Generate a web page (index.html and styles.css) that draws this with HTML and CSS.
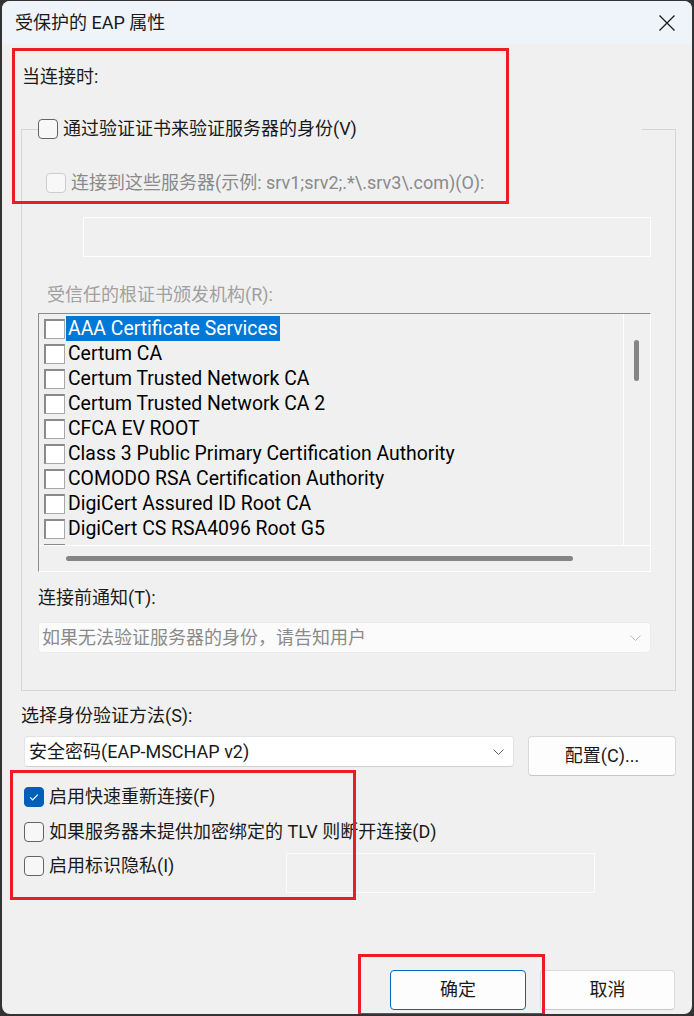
FILE: index.html
```html
<!DOCTYPE html>
<html lang="zh-CN">
<head>
<meta charset="utf-8">
<title>受保护的 EAP 属性</title>
<link rel="stylesheet" href="styles.css">
</head>
<body>
<div class="window">
  <div class="titlebar">
    <span class="title">受保护的 EAP 属性</span>
    <span class="close" aria-label="关闭">
      <svg width="16" height="16" viewBox="0 0 16 16"><path d="M0.5 0.5L15.5 15.5M15.5 0.5L0.5 15.5" stroke="#1b1b1b" stroke-width="1.3" fill="none"/></svg>
    </span>
  </div>
  <div class="content">
    <div class="label when">当连接时:</div>
    <div class="group">
      <div class="legend">
        <span class="cb"></span><span>通过验证证书来验证服务器的身份(V)</span>
      </div>
      <div class="row servers"><span class="cb cb-disabled"></span><span class="dis">连接到这些服务器(示例: srv1;srv2;.*\.srv3\.com)(O):</span></div>
      <div class="servers-input"></div>
      <div class="label trusted">受信任的根证书颁发机构(R):</div>
      <div class="list">
        <div class="list-items">
          <div class="item"><span class="lcb"></span><span class="itext selected">AAA Certificate Services</span></div>
          <div class="item"><span class="lcb"></span><span class="itext">Certum CA</span></div>
          <div class="item"><span class="lcb"></span><span class="itext">Certum Trusted Network CA</span></div>
          <div class="item"><span class="lcb"></span><span class="itext">Certum Trusted Network CA 2</span></div>
          <div class="item"><span class="lcb"></span><span class="itext">CFCA EV ROOT</span></div>
          <div class="item"><span class="lcb"></span><span class="itext">Class 3 Public Primary Certification Authority</span></div>
          <div class="item"><span class="lcb"></span><span class="itext">COMODO RSA Certification Authority</span></div>
          <div class="item"><span class="lcb"></span><span class="itext">DigiCert Assured ID Root CA</span></div>
          <div class="item"><span class="lcb"></span><span class="itext">DigiCert CS RSA4096 Root G5</span></div>
          <div class="item"><span class="lcb"></span></div>
        </div>
        <div class="vscroll"><span class="vthumb"></span></div>
        <div class="hscroll"><span class="hthumb"></span></div>
      </div>
      <div class="label notify">连接前通知(T):</div>
      <div class="select select-disabled">
        <span>如果无法验证服务器的身份，请告知用户</span>
        <svg width="11" height="6" viewBox="0 0 11 6"><path d="M0.5 0.5L5.5 5.5L10.5 0.5" stroke="#b8b8b8" stroke-width="1" fill="none"/></svg>
      </div>
    </div>
    <div class="label method">选择身份验证方法(S):</div>
    <div class="method-row">
      <div class="select select-method">
        <span>安全密码(EAP-MSCHAP v2)</span>
        <svg width="11" height="6" viewBox="0 0 11 6"><path d="M0.5 0.5L5.5 5.5L10.5 0.5" stroke="#5f5f5f" stroke-width="1" fill="none"/></svg>
      </div>
      <span class="btn config">配置(C)...</span>
    </div>
    <div class="row check r1"><span class="cb checked"><svg width="20" height="20" viewBox="0 0 20 20"><path d="M6.2 10.4L8.7 12.9L13.8 7.6" stroke="#fff" stroke-width="1.2" fill="none"/></svg></span><span>启用快速重新连接(F)</span></div>
    <div class="row check r2"><span class="cb"></span><span>如果服务器未提供加密绑定的 TLV 则断开连接(D)</span></div>
    <div class="r3">
      <div class="row check r3-label"><span class="cb"></span><span>启用标识隐私(I)</span></div>
      <div class="privacy-input"></div>
    </div>
  </div>
  <div class="footer">
    <span class="btn primary">确定</span>
    <span class="btn">取消</span>
  </div>
  <div class="annot a1"></div>
  <div class="annot a2"></div>
  <div class="annot a3"></div>
</div>
</body>
</html>
```

FILE: styles.css
```css
html, body {
  margin: 0;
  padding: 0;
}
body {
  background: #333333;
  width: 694px;
  height: 1016px;
  overflow: hidden;
}
.window {
  position: relative;
  margin: 1px 0 0 2px;
  width: 690px;
  height: 1013px;
  background: #f0f0f0;
  border-radius: 8px;
  overflow: hidden;
  display: flex;
  flex-direction: column;
  font-family: Roboto, "Noto Sans CJK SC", sans-serif;
  font-size: 18px;
  line-height: 24px;
  color: #1a1a1a;
}
.titlebar {
  flex: none;
  height: 43px;
  background: #eef4f9;
  display: flex;
  align-items: center;
  padding-left: 13px;
}
.title {
  font-size: 18px;
}
.close {
  margin-left: auto;
  margin-right: 17px;
  width: 16px;
  height: 16px;
  display: flex;
}
.content {
  display: flex;
  flex-direction: column;
  align-items: flex-start;
}
.label {
  height: 24px;
  white-space: nowrap;
}
.when {
  margin: 21px 0 0 20px;
}
.group {
  margin: 40px 0 0 19px;
  width: 655px;
  height: 562px;
  box-sizing: border-box;
  border: 1px solid #d6d6d6;
  display: flex;
  flex-direction: column;
  align-items: flex-start;
}
.legend {
  margin: -13px 0 0 16px;
  width: 604px;
  height: 24px;
  background: #f0f0f0;
  display: flex;
  align-items: center;
  gap: 5px;
  white-space: nowrap;
}
.row {
  display: flex;
  align-items: center;
  gap: 5px;
  height: 24px;
  white-space: nowrap;
}
.cb {
  flex: none;
  width: 20px;
  height: 20px;
  box-sizing: border-box;
  border: 1px solid #646464;
  border-radius: 4px;
  background: #f7f7f7;
  display: flex;
}
.cb-disabled {
  border-color: #cdcdcd;
  background: #f8f8f8;
}
.cb.checked {
  background: #005fb8;
  border-color: #005fb8;
}
.cb.checked svg {
  margin: -1px;
}
.dis {
  color: #8a8a8a;
}
.servers {
  margin: 30px 0 0 24px;
}
.servers-input {
  margin: 22px 0 0 61px;
  width: 568px;
  height: 40px;
  box-sizing: border-box;
  border: 1px solid #fdfdfd;
}
.trusted {
  margin: 26px 0 0 25px;
  color: #a0a0a0;
}
.list {
  margin: 6px 0 0 16px;
  width: 613px;
  height: 259px;
  box-sizing: border-box;
  border-top: 1px solid #8c8c8c;
  border-left: 1px solid #8c8c8c;
  border-right: 1px solid #ffffff;
  border-bottom: 1px solid #ffffff;
  display: grid;
  grid-template-columns: 584px 27px;
  grid-template-rows: 232px 1fr;
  background: #f0f0f0;
}
.list-items {
  box-sizing: border-box;
  border-bottom: 1px solid #ffffff;
  padding-top: 2px;
  overflow: hidden;
}
.item {
  height: 25px;
  display: flex;
  align-items: center;
  white-space: nowrap;
}
.lcb {
  flex: none;
  margin-left: 5px;
  width: 21px;
  height: 20px;
  box-sizing: border-box;
  background: #ffffff;
  border-top: 2px solid #8a8a8a;
  border-left: 2px solid #8a8a8a;
  border-right: 1px solid #a8a8a8;
  border-bottom: 1px solid #a8a8a8;
}
.itext {
  margin-left: 1px;
  padding: 0 2px;
  height: 25px;
  line-height: 25px;
  font-size: 19.4px;
  color: #000;
}
.itext.selected {
  background: #0078d7;
  color: #ffffff;
}
.vscroll {
  box-sizing: border-box;
  border-left: 1px solid #ffffff;
  border-bottom: 1px solid #ffffff;
  padding: 26px 0 0 10px;
}
.vthumb {
  display: block;
  width: 5px;
  height: 41px;
  border-radius: 3px;
  background: #858585;
}
.hscroll {
  grid-column: 1 / span 2;
  padding: 10px 0 0 27px;
}
.hthumb {
  display: block;
  width: 507px;
  height: 5px;
  border-radius: 3px;
  background: #858585;
}
.notify {
  margin: 14px 0 0 16px;
}
.select {
  box-sizing: border-box;
  display: flex;
  align-items: center;
  justify-content: space-between;
  border: 1px solid #e3e3e3;
  border-radius: 4px;
  background: #ffffff;
  white-space: nowrap;
}
.select svg {
  flex: none;
}
.select-disabled {
  margin: 12px 0 0 16px;
  width: 613px;
  height: 31px;
  padding: 0 9px 0 3px;
  background: #fbfbfb;
  border-color: #ebebeb;
  color: #8a8a8a;
}
.method {
  margin: 13px 0 0 19px;
}
.method-row {
  margin: 8px 0 0 22px;
  display: flex;
  align-items: flex-start;
  gap: 14px;
}
.select-method {
  width: 490px;
  height: 31px;
  padding: 0 9px 0 4px;
  border-bottom-color: #d0d0d0;
}
.btn {
  box-sizing: border-box;
  height: 40px;
  display: flex;
  align-items: center;
  justify-content: center;
  border: 1px solid #d9d9d9;
  border-bottom-color: #c6c6c6;
  border-radius: 4px;
  background: #fdfdfd;
  color: #1a1a1a;
  white-space: nowrap;
}
.config {
  width: 148px;
}
.check {
  margin-left: 22px;
}
.r1 {
  margin-top: 9px;
}
.r2 {
  margin-top: 11px;
}
.r3 {
  margin-top: 10px;
  display: flex;
  align-items: flex-start;
}
.r3-label {
  width: 262px;
  flex: none;
}
.privacy-input {
  margin-top: -1px;
  width: 309px;
  height: 40px;
  box-sizing: border-box;
  border: 1px solid #fbfbfb;
}
.footer {
  margin-top: auto;
  display: flex;
  justify-content: flex-end;
  gap: 14px;
  padding: 0 17px 4px 0;
}
.footer .btn {
  width: 136px;
}
.footer .btn + .btn {
  width: 135px;
}
.btn.primary {
  border-color: #0067c0;
}
.annot {
  position: absolute;
  box-sizing: border-box;
  border: 3px solid #ec1c24;
}
.a1 {
  left: 10px;
  top: 47px;
  width: 497px;
  height: 156px;
}
.a2 {
  left: 8px;
  top: 769px;
  width: 346px;
  height: 130px;
}
.a3 {
  left: 356px;
  top: 953px;
  width: 187px;
  height: 62px;
}
```
